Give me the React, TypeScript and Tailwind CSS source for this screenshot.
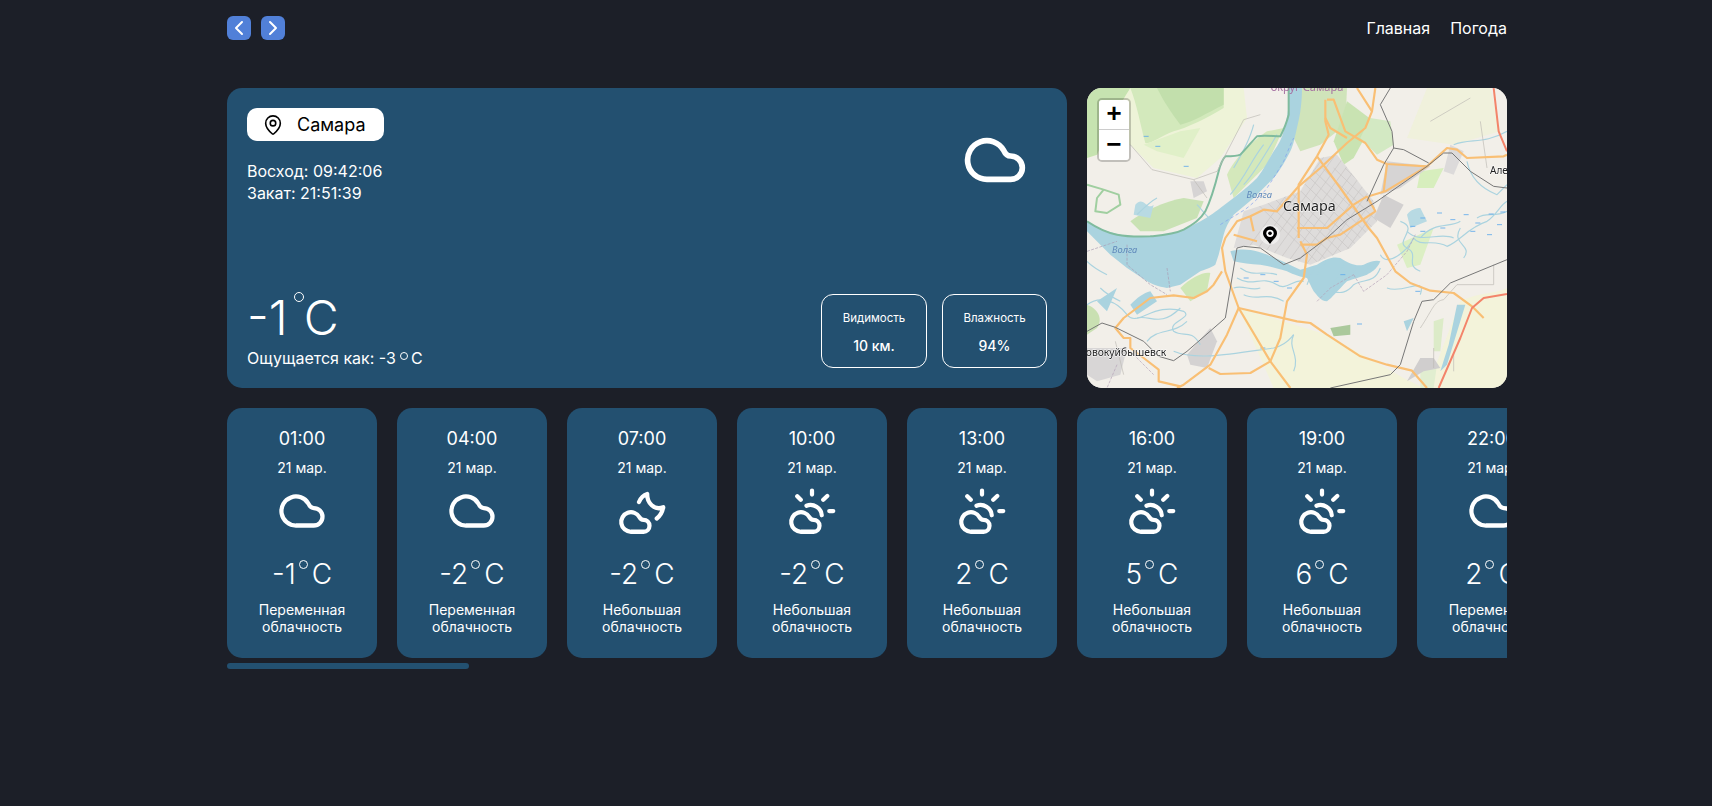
import { ChevronLeft, ChevronRight, MapPin } from 'lucide-react'

const hours = [
  { time: '01:00', temp: '-1', icon: 'cloud', text: 'Переменная' },
  { time: '04:00', temp: '-2', icon: 'cloud', text: 'Переменная' },
  { time: '07:00', temp: '-2', icon: 'moon', text: 'Небольшая' },
  { time: '10:00', temp: '-2', icon: 'sun', text: 'Небольшая' },
  { time: '13:00', temp: '2', icon: 'sun', text: 'Небольшая' },
  { time: '16:00', temp: '5', icon: 'sun', text: 'Небольшая' },
  { time: '19:00', temp: '6', icon: 'sun', text: 'Небольшая' },
  { time: '22:00', temp: '2', icon: 'cloud', text: 'Переменная' },
]

function WeatherIcon({ kind, size }: { kind: string; size: number }) {
  return (
    <svg width={size} height={size} viewBox="0 0 24 24" fill="none" stroke="white" strokeWidth="1.7" strokeLinecap="round" strokeLinejoin="round">
      {kind === 'cloud' && <path d="M9.6 17.8A5.8 5.8 0 1 1 14.6 9.1C15 10 15.7 10.8 16.7 10.8A3.5 3.5 0 0 1 16.7 17.8Z" />}
      {kind !== 'cloud' && <path d="M7.6 20.3A3.9 3.9 0 1 1 11 14.5C11.3 15.1 11.8 15.5 12.6 15.5A2.4 2.4 0 0 1 12.6 20.3Z" />}
      {kind === 'moon' && <path d="M10.8 8.4C11.5 6.8 12.7 5.6 14.1 5.2C13.9 8.6 16.9 12 20.5 10.5C20.1 12.6 19.2 14 17.9 15" />}
      {kind === 'sun' && (
        <>
          <path d="M9.8 9.9C12.5 8.8 15.8 10.8 15.9 13.7" />
          <path d="M12 3.8V5.4M6.1 6.1L7.5 7.5M16.5 7.5L18.1 6M18.9 12H20.5" />
        </>
      )}
    </svg>
  )
}

// carto drawn by hand, coordinates are 3x map pixels
const roads = [
  'M720 35H740L775 130L835 165L870 215L900 228L1020 235',
  'M810 0L855 70L835 120L780 165L700 240L635 295L570 370L530 365L490 385L450 400L415 450L405 480L415 550L455 660L550 820L610 900',
  'M865 0L855 70',
  'M715 35V100L725 140L690 205L635 290L635 450',
  'M690 205L760 300L845 420L870 450L925 550L970 585L1030 608L1100 615L1155 655L1190 690',
  'M845 325L895 310L1020 235L1080 180L1110 185L1140 210L1250 205L1260 200',
  'M900 228L890 310',
  'M840 325L865 370L760 440L720 450L690 470L640 470',
  'M630 420H720L800 350L840 325',
  'M715 90L730 120L780 150',
  'M405 550L380 590L360 610L320 630L260 622L190 630L110 690L85 720L110 750H130V780L170 810L215 845V880L280 895',
  'M455 660L420 740L370 830L290 890L270 900',
  'M365 840L400 858L490 855L550 820L580 750L600 640L650 570L660 500L640 460',
  'M455 660L630 700L670 705L720 740L820 805L900 830L975 848L1020 900',
  'M490 385L500 430M440 440L510 460',
]
const rails = [
  'M910 0L880 50L915 130L920 180L950 185L1025 225',
  'M920 180L890 230L840 340',
  'M720 450L780 395L870 340L1020 235L1070 195L1095 195L1150 250L1220 295L1260 300',
  'M0 730L45 705L85 718L170 760L215 805L260 818L300 790L415 690L450 480L470 475L520 480L590 530L640 510L720 450',
  'M730 900L910 860L940 830L980 700L1005 640L1040 635L1090 585L1260 515',
]
const lightWays = [
  'M130 170L195 245L320 275L360 330',
  'M320 275L390 250L470 95L520 80',
  'M1030 100L1150 30M1180 100L1200 240',
  'M1000 720C1040 660 1040 640 1070 635L1110 590H1220V530',
  'M85 760L110 860M1040 840V780M1100 850V800',
]
const streams = [
  'M0 650C40 620 90 640 120 680C150 720 200 640 290 670C320 690 240 700 260 730C290 750 310 720 340 770',
  'M150 690C190 680 220 720 280 660M180 760C210 720 260 740 300 700',
  'M260 790C330 820 450 795 560 780C600 770 610 750 620 740',
  'M620 740C600 780 640 800 620 850',
  'M880 500C900 540 960 490 980 450C1000 480 1040 450 1080 475C1120 460 1140 420 1200 400C1230 380 1240 350 1260 340',
  'M940 400C1000 420 920 460 960 480C1000 500 950 530 1000 550',
  'M1120 420C1090 470 1160 470 1130 510',
  'M1100 170C1150 150 1190 170 1260 130',
  'M1140 220C1150 270 1180 300 1230 320C1240 310 1250 300 1260 290',
  'M0 520C20 540 40 550 60 560M40 600C60 620 80 630 100 640',
  'M330 350C350 370 360 390 380 400M150 380C170 360 190 340 210 330',
  'M450 570C500 600 520 560 570 590C600 610 620 570 650 580M470 620C510 640 540 610 590 640',
  'M530 170C490 220 480 260 430 320M570 140C540 190 500 260 470 290M500 110C490 150 470 190 440 240',
  'M700 620C730 590 760 640 800 590C830 570 860 590 880 540',
  'M900 600C950 620 1020 560 1000 620',
  'M690 560L720 520M740 590L770 530M790 570L810 535M830 560L850 530M660 590L680 540',
  'M460 540C500 570 530 545 570 560M440 600C470 590 490 610 520 600',
  'M1000 450C1040 400 1090 420 1120 400M960 430C1000 470 1060 430 1100 450M1170 390C1200 370 1220 390 1260 370',
]
const dashes = [
  [1000, 390], [1050, 375], [1090, 395], [1130, 380], [1165, 405], [1205, 378], [1240, 372], [970, 415], [1060, 420], [1150, 430], [1200, 440], [1000, 430], [1230, 410],
  [520, 560], [560, 580], [600, 600], [470, 570], [760, 560], [810, 708], [170, 145], [290, 235], [205, 175], [520, 780], [985, 610],
]
const cityA = Array.from({ length: 15 }, (_, i) => `M${440 + i * 30} 540L${700 + i * 30} 180`)
const cityB = Array.from({ length: 13 }, (_, i) => `M${400 + i * 34} 240L${730 + i * 34} 560`)

function CityMap() {
  return (
    <svg className="w-full h-full block blur-[0.4px]" viewBox="0 0 1260 900" fill="none" strokeLinejoin="round">
      <defs>
        <clipPath id="city"><path d="M470 370L530 350L640 310L700 210L750 200L860 340L870 400L790 480L670 530L600 510L500 470L440 480Z" /></clipPath>
      </defs>
      <rect width="1260" height="900" fill="#f2efe9" />
      {/* farmland and scrub */}
      <path d="M0 0H470L480 90L400 210L330 270L200 240L130 170L0 210Z" fill="#eef3d8" />
      <path d="M455 660L720 740L950 870L1010 900H560Z" fill="#f3f3da" />
      <path d="M1120 640C1180 610 1220 620 1260 600V900H1020Z" fill="#f3f3da" />
      <path d="M1020 0H1210L1240 130L1100 170L960 150Z" fill="#f0f1dc" />
      <path d="M130 0H410V60C360 90 300 120 260 130C220 145 190 170 175 165C160 110 150 50 130 0Z" fill="#d3e9bc" />
      <path d="M0 0H130C90 60 60 130 30 200L0 210Z" fill="#c6e3b0" />
      <path d="M210 0H410V50C360 75 320 100 280 110C250 70 230 40 210 0Z" fill="#c2dfac" />
      <path d="M170 170L280 130L340 120L290 210L210 190Z" fill="#e0f0c8" />
      <path d="M130 400C170 370 230 340 290 330L350 340L330 390L230 430L160 430Z" fill="#c9e2b4" />
      <path d="M420 260C440 220 470 180 540 130L590 120L540 230L440 330Z" fill="#d4e8bb" />
      <path d="M630 0H780L775 110L700 170L640 190L610 130Z" fill="#d0e4ba" />
      <path d="M780 40L860 100L800 210L770 230L740 160Z" fill="#c9e3b2" />
      <path d="M850 90L910 100L920 170L870 200L820 150Z" fill="#d3e9c3" />
      <path d="M1000 250L1070 240L1040 300L990 300Z" fill="#d7eebd" />
      <path d="M930 470L1040 420L1000 530L960 540Z" fill="#dcefc4" />
      <path d="M280 600C310 570 350 550 370 555L360 610L310 640Z" fill="#cfe6b5" />
      <path d="M730 720L790 710L790 740L740 745Z" fill="#abc99c" />
      <path d="M1040 700L1070 690L1060 790L1040 790Z" fill="#dcebc8" />
      <path d="M1000 830H1050L1040 900H1000Z" fill="#e1eed0" />
      <path d="M0 650C30 660 50 690 30 720L0 740Z" fill="#c9e0b2" />
      {/* built up */}
      <path d="M470 370L530 350L640 310L700 210L750 200L860 340L870 400L790 480L670 530L600 510L500 470L440 480Z" fill="#dedcdb" />
      <g clipPath="url(#city)">
        {cityA.map((d) => <path key={d} d={d} stroke="#c9c6c4" strokeWidth="2" />)}
        {cityB.map((d) => <path key={d} d={d} stroke="#c9c6c4" strokeWidth="2" />)}
      </g>
      <path d="M900 220L1030 235L940 300L880 320Z" fill="#d6d4d4" />
      <path d="M890 320L860 390L910 420L950 350Z" fill="#d2d0d0" />
      <path d="M0 780L120 780L100 860L30 880L0 860Z" fill="#d8d6d6" />
      <path d="M300 800L370 720L390 760L360 840L310 830Z" fill="#d4d2d2" />
      <path d="M310 280H350L360 310L320 330Z" fill="#d6d4d4" />
      <path d="M1090 170L1130 190L1100 260L1070 250Z" fill="#dcdada" />
      <path d="M960 880L1000 810H1040L1060 840L1010 850Z" fill="#d0cece" />
      {/* water */}
      <path d="M605 0H645C645 40 640 80 632 110C625 140 620 170 610 190C590 230 570 260 560 270L500 330L440 380C425 400 415 420 410 440L395 500L385 530C370 540 350 545 340 550L280 590L240 600C210 595 200 590 180 580L120 540L70 500L20 450L0 430V400C30 420 60 432 100 440C130 445 160 446 190 445C220 445 240 440 260 435C290 428 310 415 330 405C360 390 380 375 400 360C440 330 480 300 510 270C530 245 545 215 560 190C575 170 585 150 590 130C600 95 608 50 605 0Z" fill="#aad3df" />
      <path d="M430 490C500 470 560 510 640 545C660 540 670 535 690 530C720 510 740 505 760 510C790 530 810 535 830 530C850 520 870 515 880 520C870 545 850 555 840 560C810 570 790 575 780 580C750 610 735 630 720 640C700 640 690 620 680 610C670 590 665 580 660 570C630 565 610 555 600 550C570 540 545 535 520 530C490 530 465 525 440 520Z" fill="#aad3df" />
      <path d="M130 650C150 630 170 615 190 610L210 640L150 680Z M30 640L90 600L60 670Z M950 700L980 690L960 730Z M1110 650H1135L1080 830L1060 850L1085 770Z" fill="#aad3df" />
      <path d="M145 350C170 320 180 370 200 350L190 390L140 380Z M960 380C970 365 990 360 1000 360L1020 400L970 420Z" fill="#b8dae3" />
      {streams.map((d) => <path key={d} d={d} stroke="#aad3df" strokeWidth="3.5" />)}
      {dashes.map(([x, y]) => <path key={`${x}-${y}`} d={`M${x} ${y}h15`} stroke="#5ea8ec" strokeWidth="2.5" />)}
      {/* river boundary */}
      <path d="M0 400C30 420 60 435 90 440C120 446 160 446 190 445C225 442 260 440 290 425C320 408 340 395 355 370C375 330 385 290 395 250C400 230 405 215 415 205C430 205 450 205 460 200C480 180 495 160 510 145C530 140 560 145 580 145C590 125 600 100 605 80V0" stroke="#7fbb9e" strokeWidth="6" />
      <path d="M0 290L50 305L95 320L100 350L60 375L25 370L30 330L50 305" stroke="#a0cfa0" strokeWidth="6" />
      <path d="M400 410C430 390 460 375 480 360C505 340 525 320 540 300C560 270 575 245 590 220C600 195 610 170 620 150" stroke="#7f9ef0" strokeWidth="2" strokeDasharray="10 8" />
      <path d="M120 470L120 530L190 590L240 620M0 490L90 460M240 540L250 610" stroke="#a99bb4" strokeWidth="2" strokeDasharray="9 4" />
      <path d="M800 560L830 610L900 560L960 490L985 440M690 640L730 600L800 560M90 830L60 900M130 790L200 860" stroke="#b3a0b7" strokeWidth="2" strokeDasharray="9 4" />
      {lightWays.map((d) => <path key={d} d={d} stroke="#bdb9b4" strokeWidth="2" />)}
      {roads.map((d) => <path key={d} d={d} stroke="#f9bf74" strokeWidth="6.5" />)}
      {rails.map((d) => <path key={d} d={d} stroke="#777" strokeWidth="3" />)}
      <path d="M1055 900L1120 750L1155 660L1190 630L1260 618M1220 0L1235 130L1260 190" stroke="#f3846a" strokeWidth="6" />
      {/* labels */}
      <text x="660" y="9" textAnchor="middle" fill="#a56fa0" fontFamily="'Noto Sans', sans-serif" fontSize="33">округ Самара</text>
      <text x="667" y="368" textAnchor="middle" fill="#222" stroke="#fff" strokeWidth="3" paintOrder="stroke" fontFamily="'Noto Sans', sans-serif" fontSize="43">Самара</text>
      <text x="517" y="330" textAnchor="middle" fill="#5f89bb" fontFamily="'Noto Sans', sans-serif" fontStyle="italic" fontSize="28">Волга</text>
      <text x="113" y="496" textAnchor="middle" fill="#5f89bb" fontFamily="'Noto Sans', sans-serif" fontStyle="italic" fontSize="28">Волга</text>
      <text x="238" y="803" textAnchor="end" fill="#222" stroke="#fff" strokeWidth="3" paintOrder="stroke" fontFamily="'Noto Sans', sans-serif" fontSize="31">Новокуйбышевск</text>
      <text x="1209" y="258" fill="#222" stroke="#fff" strokeWidth="3" paintOrder="stroke" fontFamily="'Noto Sans', sans-serif" fontSize="30">Алексеевка</text>
      {/* marker */}
      <circle cx="549" cy="440" r="30" fill="#fff" opacity="0.5" />
      <path d="M549 468C541 456 528 447 528 436A21 21 0 0 1 570 436C570 447 557 456 549 468Z" fill="#000" />
      <circle cx="549" cy="436" r="11" fill="#fff" />
      <circle cx="549" cy="436" r="5.5" fill="#000" />
    </svg>
  )
}

function Ring({ className }: { className: string }) {
  return <span className={`inline-block rounded-full border border-white ${className}`} />
}

function HourCard({ time, temp, icon, text }: { time: string; temp: string; icon: string; text: string }) {
  return (
    <div className="w-[150px] h-[250px] shrink-0 rounded-[15px] bg-[#235070] pt-5 flex flex-col items-center text-white">
      <div className="text-[18px] leading-[22px]">{time}</div>
      <div className="mt-[9px] text-[14px] leading-[17px]">21 мар.</div>
      <div className="mt-[5px]"><WeatherIcon kind={icon} size={60} /></div>
      <div className="mt-[15px] h-9 flex items-start text-[28px] leading-9 font-light">
        <span>{temp}</span>
        <Ring className="size-[9px] mt-[4px] ml-[3px] mr-1" />
        <span>C</span>
      </div>
      <div className="mt-[9px] text-center text-[14px] leading-[17px]">{text}<br />облачность</div>
    </div>
  )
}

function Stat({ label, value, width }: { label: string; value: string; width: string }) {
  return (
    <div className={`h-[74px] rounded-[12px] border border-white flex flex-col items-center pt-4 ${width}`}>
      <div className="text-[11.5px] leading-[15px]">{label}</div>
      <div className="mt-[11px] text-sm leading-[17px] font-medium">{value}</div>
    </div>
  )
}

export default function App() {
  return (
    <div className="min-h-screen bg-[#1c1f28] font-['Inter',sans-serif] text-white pl-[227px] pt-4">
      <div className="w-[1280px]">
        <header className="h-6 flex items-center justify-between">
          <div className="flex gap-2.5">
            <button className="size-6 rounded-md bg-[#5180d8] flex items-center justify-center"><ChevronLeft size={24} color="white" /></button>
            <button className="size-6 rounded-md bg-[#5180d8] flex items-center justify-center"><ChevronRight size={24} color="white" /></button>
          </div>
          <nav className="flex gap-5 text-base">
            <a>Главная</a>
            <a>Погода</a>
          </nav>
        </header>

        <section className="mt-12 flex gap-5">
          <div className="w-[840px] h-[300px] rounded-[15px] bg-[#235070] p-5 flex justify-between">
            <div className="flex flex-col justify-between">
              <div>
                <div className="w-[137px] h-[33px] rounded-[10px] bg-white text-black flex items-center pl-[15px] gap-[13px]">
                  <MapPin size={22} strokeWidth={1.75} />
                  <span className="text-[18px] leading-[22px]">Самара</span>
                </div>
                <div className="mt-[19px] text-base leading-[22px]">
                  <div>Восход: 09:42:06</div>
                  <div>Закат: 21:51:39</div>
                </div>
              </div>
              <div>
                <div className="h-[60px] flex items-start text-[48px] leading-[60px] font-light">
                  <span>-1</span>
                  <Ring className="size-[10px] mt-[4px] ml-[6px]" />
                  <span>C</span>
                </div>
                <div className="h-5 flex items-start text-base leading-5">
                  <span>Ощущается как: -3</span>
                  <Ring className="size-2 mt-1 ml-1 mr-[3px]" />
                  <span>C</span>
                </div>
              </div>
            </div>
            <div className="flex flex-col items-end justify-between">
              <div className="mt-3 mr-3"><WeatherIcon kind="cloud" size={80} /></div>
              <div className="flex gap-[15px]">
                <Stat label="Видимость" value="10 км." width="w-[106px]" />
                <Stat label="Влажность" value="94%" width="w-[105px]" />
              </div>
            </div>
          </div>
          <div className="relative w-[420px] h-[300px] rounded-[15px] overflow-hidden bg-[#f2efe9] text-black">
            <CityMap />
            <div className="absolute left-2.5 top-2.5 w-[34px] rounded-[5px] border-2 border-black/20 bg-clip-padding font-['Liberation_Mono',monospace] font-bold">
              <div className="h-[30px] bg-white rounded-t-[3px] border-b border-[#ccc] flex items-center justify-center text-[26px] leading-none">+</div>
              <div className="h-[30px] bg-white rounded-b-[3px] pt-0.5 flex items-center justify-center text-[26px] leading-none">−</div>
            </div>
          </div>
        </section>

        <section className="mt-5 flex gap-5 overflow-hidden">
          {hours.map((h) => <HourCard key={h.time} {...h} />)}
        </section>
        <div className="mt-[5px] w-[242px] h-1.5 rounded-full bg-[#235070]" />
      </div>
    </div>
  )
}
